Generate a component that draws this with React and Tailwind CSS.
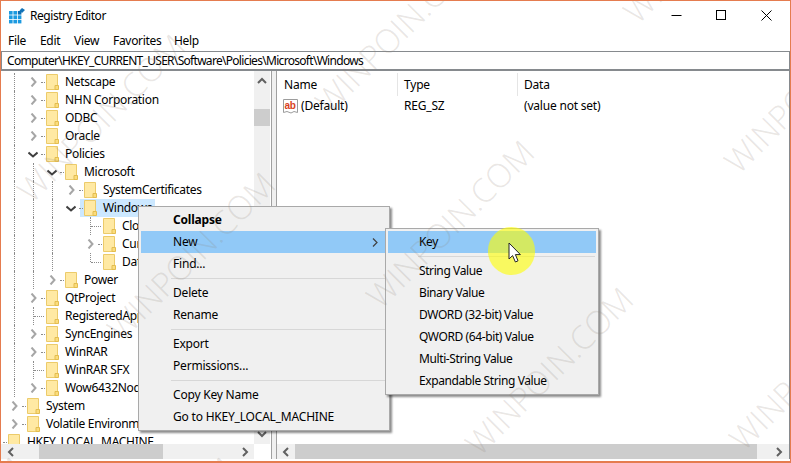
import React from "react";

// tree rows of the left pane, guides = cells that carry a dotted vertical line
const treeRows = [
    { name: "Netscape", depth: 2, toggle: "closed", guides: [1] },
    { name: "NHN Corporation", depth: 2, toggle: "closed", guides: [1] },
    { name: "ODBC", depth: 2, toggle: "closed", guides: [1] },
    { name: "Oracle", depth: 2, toggle: "closed", guides: [1] },
    { name: "Policies", depth: 2, toggle: "open", guides: [1] },
    { name: "Microsoft", depth: 3, toggle: "open", guides: [1, 2] },
    { name: "SystemCertificates", depth: 4, toggle: "closed", guides: [1, 2, 3] },
    { name: "Windows", depth: 4, toggle: "open", guides: [1, 2, 3], selected: true },
    { name: "CloudContent", depth: 5, toggle: "leaf", guides: [1, 2, 3] },
    { name: "CurrentVersion", depth: 5, toggle: "closed", guides: [1, 2, 3] },
    { name: "DataCollection", depth: 5, toggle: "last", guides: [1, 2, 3] },
    { name: "Power", depth: 3, toggle: "closed", guides: [1, 2] },
    { name: "QtProject", depth: 2, toggle: "closed", guides: [1] },
    { name: "RegisteredApplications", depth: 2, toggle: "leaf", guides: [1] },
    { name: "SyncEngines", depth: 2, toggle: "closed", guides: [1] },
    { name: "WinRAR", depth: 2, toggle: "closed", guides: [1] },
    { name: "WinRAR SFX", depth: 2, toggle: "leaf", guides: [1] },
    { name: "Wow6432Node", depth: 2, toggle: "closed", guides: [1] },
    { name: "System", depth: 1, toggle: "closed", guides: [] },
    { name: "Volatile Environment", depth: 1, toggle: "closed", guides: [] },
    { name: "HKEY_LOCAL_MACHINE", depth: 0, toggle: "none", guides: [] },
];

const mainMenu = [
    [{ label: "Collapse", bold: true }, { label: "New", active: true, arrow: true }, { label: "Find..." }],
    [{ label: "Delete" }, { label: "Rename" }],
    [{ label: "Export" }, { label: "Permissions..." }],
    [{ label: "Copy Key Name" }, { label: "Go to HKEY_LOCAL_MACHINE" }],
];

const subMenu = [
    [{ label: "Key", active: true }],
    [
        { label: "String Value" },
        { label: "Binary Value" },
        { label: "DWORD (32-bit) Value" },
        { label: "QWORD (64-bit) Value" },
        { label: "Multi-String Value" },
        { label: "Expandable String Value" },
    ],
];

const watermarks = [
    "left-[100px] top-[117px]",
    "left-[398px] top-[28px]",
    "left-[449px] top-[223px]",
    "left-[706px] top-[-62px]",
    "left-[807px] top-[88px]",
    "left-[190px] top-[255px]",
    "left-[548px] top-[370px]",
    "left-[812px] top-[365px]",
    "left-[150px] top-[540px]",
    "left-[-60px] top-[540px]",
];

function Folder() {
    return (
        <svg width="13" height="16" viewBox="0 0 13 16" className="shrink-0">
            <path d="M0.5 0.5H11.5V15.5H0.5Z" fill="#ffe9a3" stroke="#eccb6a" />
            <path d="M9 11.5H12.5V15.5H9Z" fill="#fbdc7c" stroke="#e3bd4f" />
        </svg>
    );
}

function Toggle({ type }) {
    if (type === "closed") {
        return (
            <svg width="7" height="10" viewBox="0 0 7 10" className="shrink-0">
                <path d="M1.5 0.5L5.5 5L1.5 9.5" fill="none" stroke="#a6a6a6" strokeWidth="2" />
            </svg>
        );
    }
    return (
        <svg width="10" height="7" viewBox="0 0 10 7" className="shrink-0">
            <path d="M0.5 1.5L5 5.5L9.5 1.5" fill="none" stroke="#404040" strokeWidth="2" />
        </svg>
    );
}

function TreeRow({ row }) {
    const cells = [];
    for (let i = 0; i < row.depth; i++) {
        cells.push(
            <div key={i} className="w-[19px] h-full shrink-0 pl-[6px]">
                {row.guides.includes(i) && <div className="h-full border-l border-dotted border-[#8c8c8c]" />}
            </div>
        );
    }

    return (
        <div className="flex items-center h-[18px] whitespace-nowrap">
            {cells}
            <div className="relative flex items-center w-[19px] h-full shrink-0">
                {(row.toggle === "closed" || row.toggle === "open") && (
                    <div className="flex justify-center w-[12px]">
                        <Toggle type={row.toggle} />
                    </div>
                )}
                {(row.toggle === "leaf" || row.toggle === "last") && (
                    <div className={`ml-[6px] border-l border-dotted border-[#8c8c8c] ${row.toggle === "last" ? "h-[9px] self-start" : "h-full"}`} />
                )}
                {row.toggle === "leaf" || row.toggle === "last" ? (
                    <div className="absolute left-[7px] top-[9px] w-[10px] border-t border-dotted border-[#8c8c8c]" />
                ) : (
                    <div className="absolute left-[14px] top-[9px] w-[4px] border-t border-dotted border-[#8c8c8c]" />
                )}
            </div>
            <div className={`flex items-center h-full -ml-[4px] pl-[4px] pr-[3px] ${row.selected ? "bg-[#cce8ff]" : ""}`}>
                <Folder />
                <span className="ml-[6px]">{row.name}</span>
            </div>
        </div>
    );
}

function ScrollChevron({ dir }) {
    const paths = {
        up: "M1 6L5 2L9 6",
        down: "M1 2L5 6L9 2",
        left: "M6 1L2 5L6 9",
        right: "M2 1L6 5L2 9",
    };
    const vertical = dir === "up" || dir === "down";
    return (
        <svg width={vertical ? 10 : 8} height={vertical ? 8 : 10} viewBox={vertical ? "0 0 10 8" : "0 0 8 10"}>
            <path d={paths[dir]} fill="none" stroke="#606060" strokeWidth="2" />
        </svg>
    );
}

function Menu({ groups, className, itemClass }) {
    return (
        <div className={`absolute z-10 bg-[#f0f0f0] border border-[#a9a9a9] py-[2px] px-[2px] shadow-[2px_2px_2px_rgba(0,0,0,0.45)] ${className}`}>
            {groups.map((group, g) => (
                <div key={g}>
                    {g > 0 && (
                        <div className="h-[7px] flex items-center pl-[30px] pr-[1px]">
                            <div className="w-full h-px bg-[#d7d7d7]" />
                        </div>
                    )}
                    {group.map((item) => (
                        <div
                            key={item.label}
                            className={`flex items-center justify-between h-[22px] pr-[9px] ${itemClass} ${item.active ? "bg-[#91c9f7]" : ""} ${item.bold ? "font-bold" : ""}`}
                        >
                            <span>{item.label}</span>
                            {item.arrow && (
                                <svg width="6" height="9" viewBox="0 0 6 9">
                                    <path d="M1 0.5L5 4.5L1 8.5" fill="none" stroke="#404040" strokeWidth="1.2" />
                                </svg>
                            )}
                        </div>
                    ))}
                </div>
            ))}
        </div>
    );
}

export default function App() {
    return (
        <div className="relative w-[791px] h-[463px] overflow-hidden bg-white text-black text-[12px] font-['Noto_Sans',sans-serif] border-t border-x border-b-2 border-[#e57c4f]">
            {/* title bar */}
            <div className="flex items-center h-[30px] pl-[8px]">
                <svg width="16" height="16" viewBox="0 0 16 16" className="shrink-0">
                    <g fill="#1c9ae0">
                        <rect x="0" y="3" width="3.6" height="3.6" />
                        <rect x="4.4" y="3" width="3.6" height="3.6" />
                        <rect x="8.8" y="3" width="3.6" height="3.6" fill="#0b6fb5" />
                        <rect x="0" y="7.4" width="3.6" height="3.6" />
                        <rect x="4.4" y="7.4" width="3.6" height="3.6" />
                        <rect x="8.8" y="7.4" width="3.6" height="3.6" />
                        <rect x="0" y="11.8" width="3.6" height="3.6" />
                        <rect x="4.4" y="11.8" width="3.6" height="3.6" />
                        <rect x="8.8" y="11.8" width="3.6" height="3.6" />
                    </g>
                    <path d="M13 0L16 2L13 5L10.5 2.5Z" fill="#1273b8" />
                </svg>
                <span className="ml-[5px] tracking-[-0.45px]">Registry Editor</span>
                <div className="ml-auto flex items-center pr-[18px] -mt-[2px]">
                    <svg width="11" height="11" viewBox="0 0 11 11">
                        <path d="M0.5 5.5H10.5" stroke="#000" fill="none" />
                    </svg>
                    <svg width="10" height="10" viewBox="0 0 10 10" className="ml-[34px]">
                        <rect x="0.5" y="0.5" width="9" height="9" stroke="#000" fill="none" />
                    </svg>
                    <svg width="11" height="11" viewBox="0 0 11 11" className="ml-[35px]">
                        <path d="M0.5 0.5L10.5 10.5M10.5 0.5L0.5 10.5" stroke="#000" fill="none" />
                    </svg>
                </div>
            </div>

            {/* menu bar */}
            <div className="flex items-center h-[20px] tracking-[-0.3px]">
                <span className="ml-[7px] w-[32px]">File</span>
                <span className="w-[34px]">Edit</span>
                <span className="w-[39px]">View</span>
                <span className="w-[61px]">Favorites</span>
                <span>Help</span>
            </div>

            {/* address bar */}
            <div className="flex items-center h-[20px] bg-white border-t border-b-2 border-x border-[#868a8e] pl-[5px] tracking-[-0.7px]">
                Computer\HKEY_CURRENT_USER\Software\Policies\Microsoft\Windows
            </div>

            {/* panes */}
            <div className="flex h-[390px] pb-[2px]">
                {/* tree */}
                <div className="flex flex-col w-[270px] shrink-0">
                    <div className="flex flex-1 min-h-0">
                        <div className="w-[253px] overflow-hidden pt-[2px] tracking-[-0.3px]">
                            <div className="-ml-[12px]">
                                {treeRows.map((row) => (
                                    <TreeRow key={row.name} row={row} />
                                ))}
                            </div>
                        </div>
                        <div className="flex flex-col items-center w-[16px] bg-[#f0f0f0]">
                            <div className="flex items-center justify-center h-[20px]">
                                <ScrollChevron dir="up" />
                            </div>
                            <div className="w-full h-[17px] mt-[18px] bg-[#cdcdcd]" />
                            <div className="flex-1" />
                            <div className="flex items-center justify-center h-[20px]">
                                <ScrollChevron dir="down" />
                            </div>
                        </div>
                    </div>
                    <div className="flex items-center h-[15px]">
                        <div className="flex items-center w-[253px] h-full bg-[#f0f0f0]">
                            <div className="flex justify-center w-[20px]">
                                <ScrollChevron dir="left" />
                            </div>
                            <div className="w-[124px] h-full ml-[18px] bg-[#cdcdcd]" />
                            <div className="flex-1 flex justify-end pr-[5px]">
                                <ScrollChevron dir="right" />
                            </div>
                        </div>
                    </div>
                </div>

                {/* splitter */}
                <div className="w-[6px] shrink-0 bg-[#f0f0f0] border-x border-[#a0a0a0]" />

                {/* values */}
                <div className="flex flex-col flex-1 min-w-0 bg-white border-r border-[#868a8e] tracking-[-0.2px]">
                    <div className="flex-1">
                        <div className="flex items-center h-[25px] pt-[2px]">
                            <div className="w-[121px] h-full flex items-center pl-[7px] border-r border-[#e5e5e5]">Name</div>
                            <div className="w-[120px] h-full flex items-center pl-[6px] border-r border-[#e5e5e5]">Type</div>
                            <div className="pl-[6px]">Data</div>
                        </div>
                        <div className="flex items-center h-[20px]">
                            <div className="flex items-center w-[121px] pl-[6px]">
                                <svg width="15" height="16" viewBox="0 0 15 16" className="shrink-0">
                                    <path d="M0.5 1.5H14.5V14.5L11 13.5L8 15L4 13.5L0.5 14.5Z" fill="#fff" stroke="#9c9c9c" />
                                    <text x="1.5" y="11" fontSize="10" fontWeight="700" fill="#d8421c" fontFamily="Liberation Sans">ab</text>
                                </svg>
                                <span className="ml-[3px]">(Default)</span>
                            </div>
                            <div className="w-[120px] pl-[6px]">REG_SZ</div>
                            <div className="pl-[6px]">(value not set)</div>
                        </div>
                    </div>
                    <div className="flex items-center h-[15px] bg-[#f0f0f0]">
                        <div className="flex justify-center w-[18px]">
                            <ScrollChevron dir="left" />
                        </div>
                        <div className="w-[462px] h-full bg-[#cdcdcd]" />
                        <div className="flex-1 flex justify-end pr-[6px]">
                            <ScrollChevron dir="right" />
                        </div>
                    </div>
                </div>
            </div>

            {/* context menus */}
            <Menu groups={mainMenu} className="left-[137px] top-[205px] w-[252px] tracking-[-0.2px]" itemClass="pl-[32px]" />
            <Menu groups={subMenu} className="left-[384px] top-[227px] w-[214px] tracking-[-0.4px]" itemClass="pl-[31px]" />

            {/* highlighter circle and pointer */}
            <div className="absolute z-20 left-[487px] top-[226px] w-[47px] h-[48px] rounded-full bg-[#ffff00]/60" />
            <svg width="14" height="22" viewBox="0 0 14 22" className="absolute z-20 left-[507px] top-[241px]">
                <path d="M1 1V17L4.6 13.6L7.4 20L10 18.8L7.4 12.6H12.4Z" fill="#fff" stroke="#222" strokeWidth="1" />
            </svg>

            {/* watermark */}
            <div className="absolute inset-0 z-30 overflow-hidden pointer-events-none">
                {watermarks.map((pos) => (
                    <span
                        key={pos}
                        className={`absolute ${pos} -translate-x-1/2 -translate-y-1/2 -rotate-45 whitespace-nowrap text-[33px] font-light text-[#8f8478]/20 font-['Open_Sans',sans-serif]`}
                    >
                        WINPOIN.COM
                    </span>
                ))}
            </div>
        </div>
    );
}
